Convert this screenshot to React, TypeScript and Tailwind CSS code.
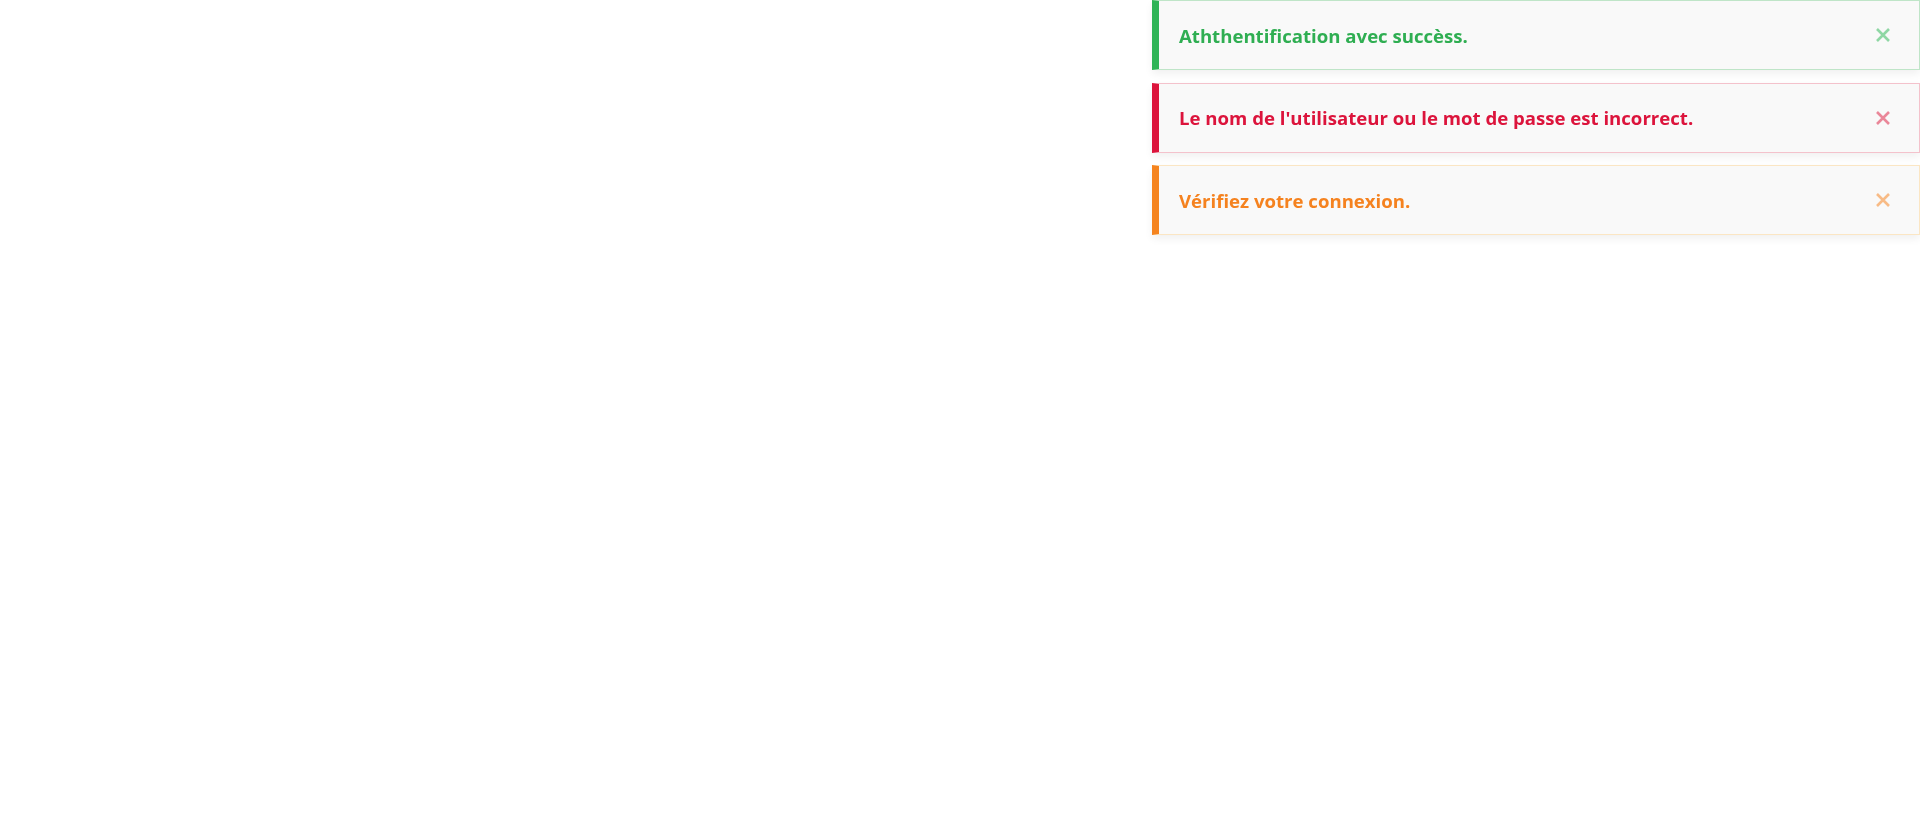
type Toast = { text: string; bar: string; border: string; color: string; close: string };

const toasts: Toast[] = [
  {
    text: "Aththentification avec succèss.",
    bar: "border-l-[#2fb457]",
    border: "border-[#bfe5c8]",
    color: "text-[#2fae52]",
    close: "text-[#8fd7a4]",
  },
  {
    text: "Le nom de l'utilisateur ou le mot de passe est incorrect.",
    bar: "border-l-[#dc143c]",
    border: "border-[#f4c2cc]",
    color: "text-[#dc143c]",
    close: "text-[#ea8799]",
  },
  {
    text: "Vérifiez votre connexion.",
    bar: "border-l-[#f5841f]",
    border: "border-[#fbe6c4]",
    color: "text-[#f5821f]",
    close: "text-[#f8bb86]",
  },
];

function CloseIcon({ className }: { className: string }) {
  return (
    <svg viewBox="0 0 14 14" className={`h-[14px] w-[14px] ${className}`} fill="none" stroke="currentColor" strokeWidth={2.6}>
      <path d="M1 1L13 13M13 1L1 13" />
    </svg>
  );
}

export default function App() {
  return (
    <div className="min-h-screen w-full bg-white font-['Open_Sans','Noto_Sans',sans-serif]">
      {/* Toast stack, pinned top-right */}
      <div className="fixed right-0 top-0 flex w-[768px] flex-col gap-[12.5px]">
        {toasts.map((t) => (
          <div
            key={t.text}
            className={`flex h-[70px] items-center justify-between border border-l-[7px] bg-[#f9f9f9] pl-[20px] pr-[29px] shadow-[0_4px_8px_rgba(0,0,0,0.06)] ${t.border} ${t.bar}`}
          >
            <span className={`pt-[1px] text-[18.6px] font-bold ${t.color}`}>{t.text}</span>
            <CloseIcon className={t.close} />
          </div>
        ))}
      </div>
    </div>
  );
}
